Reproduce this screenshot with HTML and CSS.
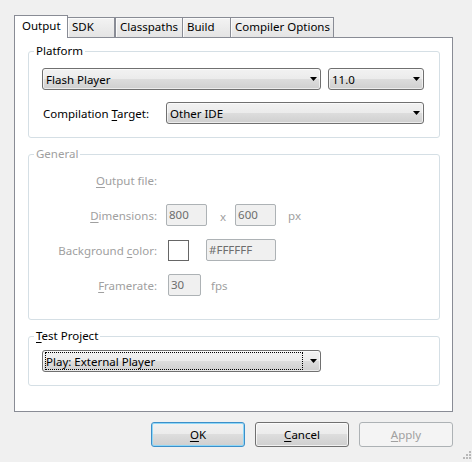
FILE: index.html
```html
<!DOCTYPE html>
<html>
<head>
<meta charset="utf-8">
<link rel="stylesheet" href="styles.css">
</head>
<body>
<div class="dialog">
  <div class="tabs">
    <div class="tab active t-output">Output</div>
    <div class="tab t-sdk">SDK</div>
    <div class="tab t-classpaths">Classpaths</div>
    <div class="tab t-build">Build</div>
    <div class="tab t-compiler">Compiler Options</div>
  </div>
  <div class="panel">
    <fieldset class="group">
      <legend>Platform</legend>
      <div class="body platform">
        <div class="row">
          <div class="combo c-platform"><span class="val">Flash Player</span><svg class="arrow" width="7" height="4" viewBox="0 0 7 4"><path d="M0 0H7L3.5 4Z"/></svg></div>
          <div class="combo c-version"><span class="val">11.0</span><svg class="arrow" width="7" height="4" viewBox="0 0 7 4"><path d="M0 0H7L3.5 4Z"/></svg></div>
        </div>
        <div class="row row2">
          <span class="label">Compilation <u>T</u>arget:</span>
          <div class="combo c-target"><span class="val">Other IDE</span><svg class="arrow" width="7" height="4" viewBox="0 0 7 4"><path d="M0 0H7L3.5 4Z"/></svg></div>
        </div>
      </div>
    </fieldset>
    <fieldset class="group disabled">
      <legend>General</legend>
      <div class="body form">
        <span class="flabel"><u>O</u>utput file:</span>
        <span></span>
        <span class="flabel"><u>D</u>imensions:</span>
        <div class="inline">
          <span class="field f-dim">800</span>
          <span class="unit u-x">x</span>
          <span class="field f-dim">600</span>
          <span class="unit u-px">px</span>
        </div>
        <span class="flabel">Background <u>c</u>olor:</span>
        <div class="inline shift">
          <span class="swatch"></span>
          <span class="field f-hex">#FFFFFF</span>
        </div>
        <span class="flabel"><u>F</u>ramerate:</span>
        <div class="inline shift">
          <span class="field f-fps">30</span>
          <span class="unit u-fps">fps</span>
        </div>
      </div>
    </fieldset>
    <fieldset class="group">
      <legend><u>T</u>est Project</legend>
      <div class="body test">
        <div class="combo c-platform"><span class="focus">Play: External Player</span><svg class="arrow" width="7" height="4" viewBox="0 0 7 4"><path d="M0 0H7L3.5 4Z"/></svg></div>
      </div>
    </fieldset>
  </div>
  <div class="buttons">
    <div class="btn default"><span><u>O</u>K</span></div>
    <div class="btn"><span><u>C</u>ancel</span></div>
    <div class="btn off"><span><u>A</u>pply</span></div>
  </div>
</div>
<svg class="grip" width="12" height="12" viewBox="0 0 12 12">
  <g fill="#b8b8b8">
    <rect x="9" y="1" width="2" height="2"/>
    <rect x="6" y="4" width="2" height="2"/><rect x="9" y="4" width="2" height="2"/>
    <rect x="3" y="7" width="2" height="2"/><rect x="6" y="7" width="2" height="2"/><rect x="9" y="7" width="2" height="2"/>
  </g>
</svg>
</body>
</html>
```
FILE: styles.css
```css
* { box-sizing: border-box; }
html, body { margin: 0; padding: 0; }
body {
  width: 472px;
  height: 462px;
  overflow: hidden;
  position: relative;
  background: #f0f0f0;
  font-family: "Noto Sans", "Open Sans", sans-serif;
  font-size: 11.5px;
  color: #000;
}
u { text-decoration: underline; text-underline-offset: 2px; }
.dialog { padding: 15px 19px 0 14px; }

/* tabs */
.tabs {
  display: flex;
  align-items: flex-end;
  height: 22px;
  position: relative;
  z-index: 1;
}
.tab {
  height: 20px;
  line-height: 18px;
  padding-left: 4px;
  border: 1px solid #898c95;
  border-bottom: none;
  margin-left: -1px;
  background: linear-gradient(#f3f3f3, #e4e4e4);
  box-shadow: inset 1px 1px 0 #fbfbfb;
  white-space: nowrap;
  overflow: hidden;
}
.tab.active {
  height: 23px;
  margin-bottom: -1px;
  margin-left: 0;
  line-height: 20px;
  padding-left: 7px;
  background: #fff;
  box-shadow: none;
  position: relative;
  z-index: 2;
}
.t-output { width: 54px; }
.t-sdk { width: 48px; }
.t-classpaths { width: 68px; margin-left: 0; }
.t-build { width: 49px; }
.t-compiler { width: 104px; }

/* panel */
.panel {
  background: #fff;
  border: 1px solid #898c95;
  padding: 5px 12px 25px 13px;
}
.group {
  margin: 0;
  padding: 0;
  min-width: 0;
  border: 1px solid #d5dfe5;
  border-radius: 3px;
}
.group + .group { margin-top: 8px; }
.group legend {
  margin-left: 5px;
  padding: 0 2px;
  line-height: 16px;
}
.group.disabled legend { color: #a0a0a0; }

.platform { padding: 9px 15px 13px 13px; }
.row { display: flex; align-items: center; gap: 7px; }
.row2 { margin-top: 12px; }
.row2 .label { flex: 1; padding-left: 1px; }

.combo {
  height: 22px;
  border: 1px solid #707070;
  border-radius: 3px;
  background: linear-gradient(#f2f2f2 0%, #ebebeb 50%, #dddddd 50%, #cfcfcf 100%);
  box-shadow: inset 0 0 0 1px rgba(255,255,255,0.6);
  display: flex;
  align-items: center;
  padding: 0 3px 0 3px;
  flex: none;
}
.combo .val { flex: 1; white-space: nowrap; }
.combo .arrow { flex: none; fill: #000; }
.c-platform { width: 279px; }
.c-version { width: 96px; }
.c-target { width: 258px; }

/* general form */
.form {
  display: grid;
  grid-template-columns: 115px auto;
  grid-auto-rows: 22px;
  column-gap: 9px;
  row-gap: 13px;
  align-items: center;
  padding: 7px 13px 23px 13px;
}
.flabel { text-align: right; color: #a0a0a0; white-space: nowrap; }
.inline { display: flex; align-items: center; }
.shift { padding-left: 2px; }
.field {
  height: 22px;
  border: 1px solid #adb2b5;
  border-radius: 2px;
  background: #f0f0f0;
  color: #6d6d6d;
  padding-left: 2px;
  line-height: 20px;
}
.f-dim { width: 41px; }
.f-hex { width: 70px; margin-left: 17px; }
.f-fps { width: 33px; }
.unit { color: #a0a0a0; }
.u-x { margin: 2px 9px 0 13px; }
.u-px { margin-left: 12px; }
.u-fps { margin-left: 10px; }
.swatch {
  width: 21px;
  height: 21px;
  border: 1px solid #666;
  background: #fff;
}

/* test project */
.test { padding: 6px 0 13px 13px; }
.test .combo { padding-left: 2px; }
.focus {
  flex: 1;
  align-self: stretch;
  margin: 1px 7px 1px 0;
  border: 1px dotted #000;
  line-height: 17px;
  white-space: nowrap;
}

/* buttons */
.buttons {
  display: flex;
  justify-content: flex-end;
  gap: 10px;
  margin-top: 10px;
}
.btn {
  width: 94px;
  height: 25px;
  border: 1px solid #707070;
  border-radius: 3px;
  background: linear-gradient(#f2f2f2 0%, #ebebeb 50%, #dddddd 50%, #cfcfcf 100%);
  box-shadow: inset 0 0 0 1px rgba(255,255,255,0.7);
  display: flex;
  align-items: center;
  justify-content: center;
}
.btn.default {
  border-color: #3c8fc9;
  box-shadow: inset 0 0 0 1px #8fd7f7;
}
.btn.off {
  border-color: #adb2b5;
  background: #f4f4f4;
  box-shadow: none;
  color: #a0a0a0;
}
.grip { position: absolute; right: 0; bottom: 0; }
```
